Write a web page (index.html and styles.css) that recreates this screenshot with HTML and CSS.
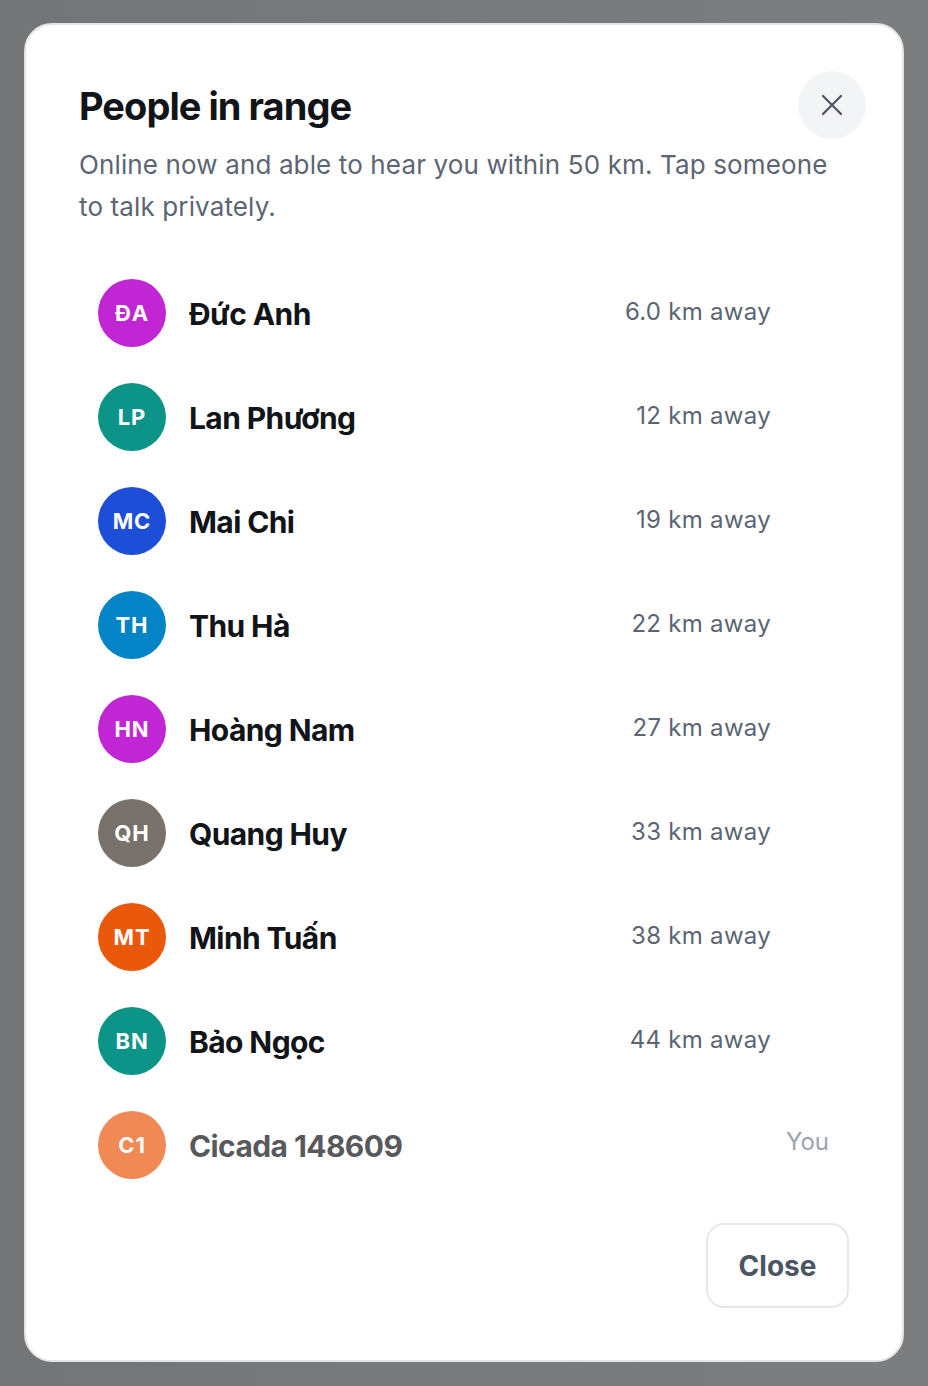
FILE: index.html
```html
<!DOCTYPE html>
<html lang="vi">
<head>
    <meta charset="UTF-8">
    <meta name="viewport" content="width=device-width, initial-scale=1.0">
    <title>People in range</title>
    <link rel="stylesheet" href="styles.css">
</head>
<body>
    <div class="backdrop">
        <div class="modal" role="dialog" aria-labelledby="modalTitle">
            <div class="modal-header">
                <h2 id="modalTitle">People in range</h2>
                <button class="icon-close" aria-label="Close">
                    <svg width="24" height="24" viewBox="0 0 24 24" fill="none" stroke="currentColor" stroke-width="2.2" stroke-linecap="round">
                        <path d="M3 3L21 21M21 3L3 21"/>
                    </svg>
                </button>
            </div>
            <p class="subtitle">Online now and able to hear you within 50 km. Tap someone to talk privately.</p>

            <ul class="people">
                <li class="person">
                    <span class="avatar fuchsia">ĐA</span>
                    <span class="name">Đức Anh</span>
                    <span class="distance">6.0 km away</span>
                </li>
                <li class="person">
                    <span class="avatar teal">LP</span>
                    <span class="name">Lan Phương</span>
                    <span class="distance">12 km away</span>
                </li>
                <li class="person">
                    <span class="avatar blue">MC</span>
                    <span class="name">Mai Chi</span>
                    <span class="distance">19 km away</span>
                </li>
                <li class="person">
                    <span class="avatar sky">TH</span>
                    <span class="name">Thu Hà</span>
                    <span class="distance">22 km away</span>
                </li>
                <li class="person">
                    <span class="avatar fuchsia">HN</span>
                    <span class="name">Hoàng Nam</span>
                    <span class="distance">27 km away</span>
                </li>
                <li class="person">
                    <span class="avatar stone">QH</span>
                    <span class="name">Quang Huy</span>
                    <span class="distance">33 km away</span>
                </li>
                <li class="person">
                    <span class="avatar orange">MT</span>
                    <span class="name">Minh Tuấn</span>
                    <span class="distance">38 km away</span>
                </li>
                <li class="person">
                    <span class="avatar teal">BN</span>
                    <span class="name">Bảo Ngọc</span>
                    <span class="distance">44 km away</span>
                </li>
                <li class="person self">
                    <span class="avatar orange">C1</span>
                    <span class="name">Cicada 148609</span>
                    <span class="you">You</span>
                </li>
            </ul>

            <div class="modal-footer">
                <button class="btn-close">Close</button>
            </div>
        </div>
    </div>
</body>
</html>
```

FILE: styles.css
```css
* {
    box-sizing: border-box;
}
body {
    margin: 0;
    font-family: Inter, "Noto Sans", sans-serif;
    background-color: #78797b;
}
.backdrop {
    min-height: 100vh;
    padding: 23px 24px;
    background:
        linear-gradient(90deg, rgba(0, 0, 0, 0.04), rgba(0, 0, 0, 0) 40%, rgba(255, 255, 255, 0.03));
}
.modal {
    width: 880px;
    background: #fff;
    border: 2px solid #e4e4e4;
    border-radius: 28px;
    padding: 46px 53px 52px 53px;
}
.modal-header {
    display: flex;
    justify-content: space-between;
    align-items: center;
    margin-right: -17px;
}
h2 {
    margin: 2px 0 0;
    font-size: 38px;
    font-weight: 700;
    letter-spacing: -0.025em;
    color: #111418;
}
.icon-close {
    width: 68px;
    height: 68px;
    border: none;
    border-radius: 50%;
    background: #f3f4f6;
    color: #4b5563;
    display: flex;
    align-items: center;
    justify-content: center;
    cursor: pointer;
}
.subtitle {
    margin: 5px 0 0;
    font-size: 26px;
    line-height: 42px;
    color: #5b6573;
    letter-spacing: 0.005em;
}
.people {
    list-style: none;
    margin: 33px 0 0;
    padding: 0;
}
.person {
    display: flex;
    align-items: center;
    height: 104px;
    padding: 0 20px 0 19px;
}
.avatar {
    width: 68px;
    height: 68px;
    border-radius: 50%;
    flex: none;
    display: flex;
    align-items: center;
    justify-content: center;
    color: #fff;
    font-size: 22px;
    font-weight: 700;
    letter-spacing: 0.04em;
}
.fuchsia { background: #c026d3; }
.teal { background: #0d9488; }
.blue { background: #1d4ed8; }
.sky { background: #0284c7; }
.stone { background: #78716c; }
.orange { background: #ea580c; }
.name {
    margin-left: 23px;
    margin-top: 2px;
    flex: 1;
    font-size: 30px;
    font-weight: 700;
    letter-spacing: -0.02em;
    color: #111418;
}
.distance {
    margin-right: 58px;
    margin-top: -4px;
    font-size: 24px;
    color: #5b6573;
    letter-spacing: 0.012em;
}
.you {
    margin-top: -8px;
    font-size: 24px;
    color: #9ca3af;
}
.self .avatar,
.self .name {
    opacity: 0.7;
}
.modal-footer {
    display: flex;
    justify-content: flex-end;
    margin-top: 26px;
}
.btn-close {
    width: 143px;
    height: 85px;
    background: #fff;
    border: 2px solid #e5e7eb;
    border-radius: 18px;
    font-family: inherit;
    font-size: 28px;
    font-weight: 700;
    color: #4b5563;
    cursor: pointer;
}
```
